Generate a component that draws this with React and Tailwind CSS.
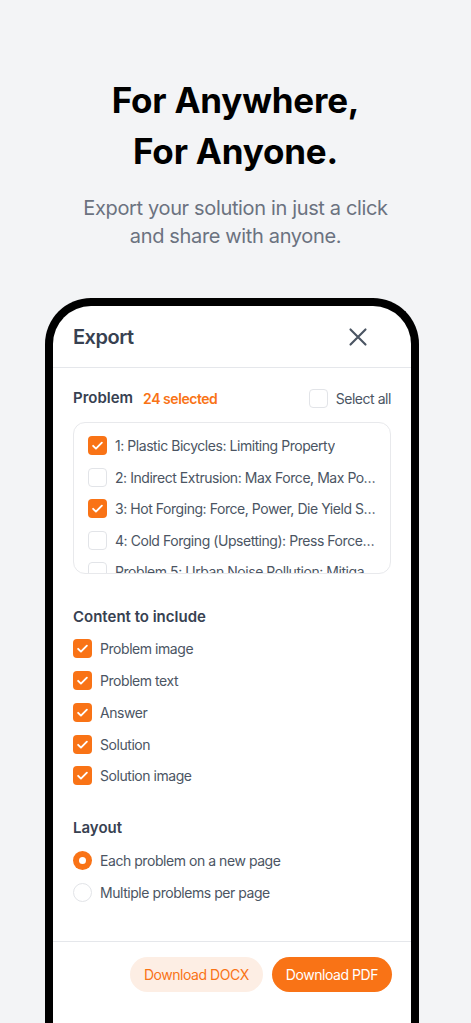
import React from "react";

const problems = [
  { label: "1: Plastic Bicycles: Limiting Property", checked: true },
  { label: "2: Indirect Extrusion: Max Force, Max Power and Efficiency", checked: false },
  { label: "3: Hot Forging: Force, Power, Die Yield Strength", checked: true },
  { label: "4: Cold Forging (Upsetting): Press Force and Energy", checked: false },
  { label: "Problem 5: Urban Noise Pollution: Mitigation", checked: false },
];

const contents = ["Problem image", "Problem text", "Answer", "Solution", "Solution image"];

function Checkbox({ checked }) {
  if (checked) {
    return (
      <span className="flex h-[19px] w-[19px] shrink-0 items-center justify-center rounded-[4px] bg-[#f97316]">
        <svg width="15" height="15" viewBox="0 0 24 24" fill="none" stroke="white" strokeWidth="3" strokeLinecap="round" strokeLinejoin="round">
          <path d="M5 12.5l4.5 4.5L19 7.5" />
        </svg>
      </span>
    );
  }
  return <span className="h-[19px] w-[19px] shrink-0 rounded-[4px] border border-[#e2e4e8] bg-white" />;
}

function Radio({ checked }) {
  if (checked) {
    return (
      <span className="flex h-[19px] w-[19px] shrink-0 items-center justify-center rounded-full bg-[#f97316]">
        <span className="h-[7px] w-[7px] rounded-full bg-white" />
      </span>
    );
  }
  return <span className="h-[19px] w-[19px] shrink-0 rounded-full border border-[#e2e4e8] bg-white" />;
}

export default function App() {
  return (
    <div className="flex h-[1023px] flex-col items-center overflow-hidden bg-[#f3f4f6] font-['Inter',sans-serif]">
      <h1 className="mt-[75px] text-center text-[35px] font-bold leading-[51px] tracking-[-0.2px] text-black">
        For Anywhere,
        <br />
        For Anyone.
      </h1>
      <p className="mt-[17px] text-center text-[20px] leading-[28px] tracking-[-0.35px] text-[#6b7280]">
        Export your solution in just a click
        <br />
        and share with anyone.
      </p>

      <div className="mt-[48px] ml-[45px] w-[374px] shrink-0 self-start rounded-t-[46px] border-8 border-b-0 border-black bg-white">
        <div className="flex h-[62px] items-center justify-between border-b border-[#e5e7eb] pl-5 pr-[38px]">
          <span className="text-[20px] font-semibold tracking-[-0.5px] text-[#374151]">Export</span>
          <svg width="30" height="30" viewBox="0 0 24 24" fill="none" stroke="#4b5563" strokeWidth="1.7" strokeLinecap="round">
            <path d="M18 6L6 18M6 6l12 12" />
          </svg>
        </div>

        <div className="px-5 pt-5 text-[14px] tracking-[-0.45px]">
          <div className="flex h-5 items-center justify-between">
            <div className="flex items-center gap-[10px]">
              <span className="text-[15px] font-semibold tracking-normal text-[#374151]">Problem</span>
              <span className="font-semibold text-[#f97316]">24 selected</span>
            </div>
            <div className="flex items-center gap-[8px]">
              <Checkbox checked={false} />
              <span className="text-[#4b5563]">Select all</span>
            </div>
          </div>

          <div className="mt-[14px] h-[152px] overflow-hidden rounded-xl border border-[#e8e9ec] pl-[14px] pr-[13px] pt-[7px]">
            {problems.map((p) => (
              <div key={p.label} className="flex h-[31.5px] items-center gap-[8px]">
                <Checkbox checked={p.checked} />
                <span className="truncate text-[#4b5563]">{p.label}</span>
              </div>
            ))}
          </div>

          <div className="mt-[33px] flex h-5 items-center text-[15px] font-semibold tracking-normal text-[#374151]">
            Content to include
          </div>
          <div className="mt-[6px]">
            {contents.map((c) => (
              <div key={c} className="flex h-[31.75px] items-center gap-2">
                <Checkbox checked />
                <span className="text-[#4b5563]">{c}</span>
              </div>
            ))}
          </div>

          <div className="mt-[26px] flex h-5 items-center text-[15px] font-semibold tracking-normal text-[#374151]">
            Layout
          </div>
          <div className="mt-[7px]">
            <div className="flex h-8 items-center gap-2">
              <Radio checked />
              <span className="text-[#4b5563]">Each problem on a new page</span>
            </div>
            <div className="flex h-8 items-center gap-2">
              <Radio checked={false} />
              <span className="text-[#4b5563]">Multiple problems per page</span>
            </div>
          </div>
        </div>

        <div className="mt-[32px] flex justify-end gap-[9px] border-t border-[#e5e7eb] pl-5 pr-[19px] pt-[15px] pb-10">
          <button className="h-[35px] rounded-full bg-[#fdeee4] px-[14px] text-[14px] tracking-[-0.45px] text-[#f97316]">
            Download DOCX
          </button>
          <button className="h-[35px] rounded-full bg-[#f97316] px-[14px] text-[14px] tracking-[-0.45px] text-white">
            Download PDF
          </button>
        </div>
      </div>
    </div>
  );
}
